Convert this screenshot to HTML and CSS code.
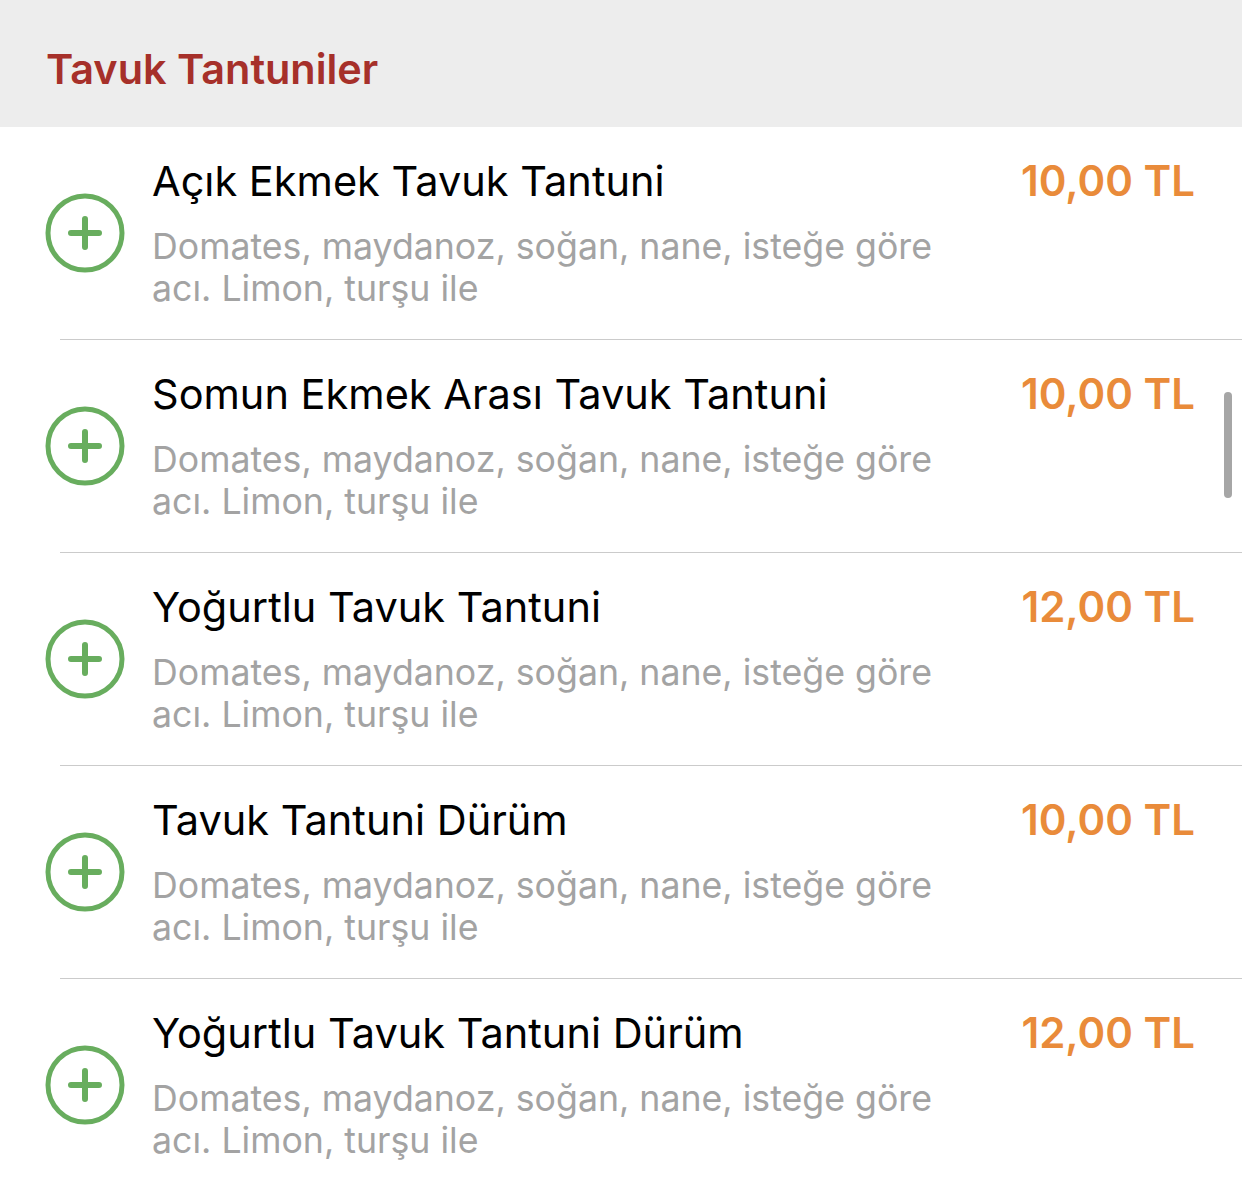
FILE: index.html
```html
<!DOCTYPE html>
<html>
<head>
  <title>Tavuk Tantuniler</title>
<link rel="stylesheet" href="styles.css"></head>
<body>
  <div class="section-header">
    <h2>Tavuk Tantuniler</h2>
  </div>
  <ul class="menu-list">
    <li class="menu-item">
      <span class="add-btn"><svg viewBox="0 0 80 80" width="80" height="80"><circle cx="40" cy="40" r="37" fill="none" stroke="#68ad5e" stroke-width="5"/><path d="M40 26v28M26 40h28" stroke="#68ad5e" stroke-width="6" stroke-linecap="round"/></svg></span>
      <div class="item-info">
        <div class="item-name">Açık Ekmek Tavuk Tantuni</div>
        <div class="item-desc">Domates, maydanoz, soğan, nane, isteğe göre acı. Limon, turşu ile</div>
      </div>
      <div class="item-price">10,00 TL</div>
    </li>
    <li class="menu-item">
      <span class="add-btn"><svg viewBox="0 0 80 80" width="80" height="80"><circle cx="40" cy="40" r="37" fill="none" stroke="#68ad5e" stroke-width="5"/><path d="M40 26v28M26 40h28" stroke="#68ad5e" stroke-width="6" stroke-linecap="round"/></svg></span>
      <div class="item-info">
        <div class="item-name">Somun Ekmek Arası Tavuk Tantuni</div>
        <div class="item-desc">Domates, maydanoz, soğan, nane, isteğe göre acı. Limon, turşu ile</div>
      </div>
      <div class="item-price">10,00 TL</div>
    </li>
    <li class="menu-item">
      <span class="add-btn"><svg viewBox="0 0 80 80" width="80" height="80"><circle cx="40" cy="40" r="37" fill="none" stroke="#68ad5e" stroke-width="5"/><path d="M40 26v28M26 40h28" stroke="#68ad5e" stroke-width="6" stroke-linecap="round"/></svg></span>
      <div class="item-info">
        <div class="item-name">Yoğurtlu Tavuk Tantuni</div>
        <div class="item-desc">Domates, maydanoz, soğan, nane, isteğe göre acı. Limon, turşu ile</div>
      </div>
      <div class="item-price">12,00 TL</div>
    </li>
    <li class="menu-item">
      <span class="add-btn"><svg viewBox="0 0 80 80" width="80" height="80"><circle cx="40" cy="40" r="37" fill="none" stroke="#68ad5e" stroke-width="5"/><path d="M40 26v28M26 40h28" stroke="#68ad5e" stroke-width="6" stroke-linecap="round"/></svg></span>
      <div class="item-info">
        <div class="item-name">Tavuk Tantuni Dürüm</div>
        <div class="item-desc">Domates, maydanoz, soğan, nane, isteğe göre acı. Limon, turşu ile</div>
      </div>
      <div class="item-price">10,00 TL</div>
    </li>
    <li class="menu-item">
      <span class="add-btn"><svg viewBox="0 0 80 80" width="80" height="80"><circle cx="40" cy="40" r="37" fill="none" stroke="#68ad5e" stroke-width="5"/><path d="M40 26v28M26 40h28" stroke="#68ad5e" stroke-width="6" stroke-linecap="round"/></svg></span>
      <div class="item-info">
        <div class="item-name">Yoğurtlu Tavuk Tantuni Dürüm</div>
        <div class="item-desc">Domates, maydanoz, soğan, nane, isteğe göre acı. Limon, turşu ile</div>
      </div>
      <div class="item-price">12,00 TL</div>
    </li>
  </ul>
  <div class="scroll-thumb"></div>
</body>
</html>
```

FILE: styles.css
```css
body {
    margin: 0;
    background: #fff;
    font-family: Inter, "Noto Sans", sans-serif;
    overflow: hidden;
  }

  .section-header {
    height: 127px;
    background: #ededed;
    padding-left: 46px;
    padding-top: 10px;
    display: flex;
    align-items: center;
    box-sizing: border-box;
  }

  .section-header h2 {
    margin: 0;
    font-size: 41.4px;
    font-weight: 600;
    color: #a6302a;
  }

  .menu-list {
    list-style: none;
    margin: 0;
    padding: 0;
  }

  .menu-item {
    display: flex;
    align-items: flex-start;
    height: 212px;
    margin-left: 60px;
    border-bottom: 1px solid #cbcbcb;
  }

  .add-btn {
    margin-left: -15px;
    margin-top: 66px;
    width: 80px;
    height: 80px;
  }

  .add-btn svg {
    display: block;
  }

  .item-info {
    flex: 1;
    margin-left: 27px;
    padding-top: 29px;
    max-width: 820px;
  }

  .item-name {
    font-size: 41.5px;
    line-height: 50px;
    color: #000;
  }

  .item-desc {
    margin-top: 19px;
    font-size: 35.7px;
    line-height: 42px;
    color: #a3a3a3;
  }

  .item-price {
    margin-left: auto;
    margin-right: 47px;
    padding-top: 29px;
    font-size: 42px;
    line-height: 50px;
    font-weight: 600;
    color: #e98b3a;
  }

  .scroll-thumb {
    position: absolute;
    left: 1224px;
    top: 392px;
    width: 8px;
    height: 106px;
    border-radius: 4px;
    background: #a6a6a6;
  }
```
